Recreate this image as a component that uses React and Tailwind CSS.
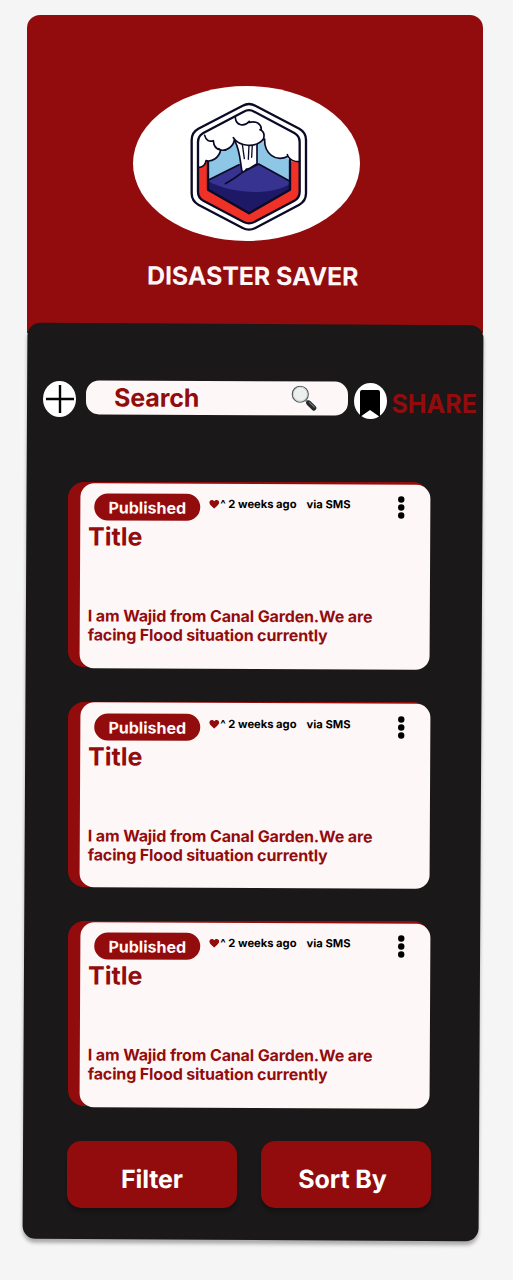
import React from "react";

function Logo() {
  return (
    <svg className="h-[140px] w-[135px]" viewBox="0 0 405 420" fill="none" strokeLinejoin="round" strokeLinecap="round">
      <path d="M188 29 Q207 19 226 29 L358 98 Q378 109 378 132 L378 292 Q378 315 358 326 L226 396 Q207 406 188 396 L55 326 Q35 315 35 292 L35 132 Q35 109 55 98 Z" fill="#fff" stroke="#0b0a26" strokeWidth="7" />
      <path d="M191 47 Q207 38 223 47 L343 111 Q359 120 359 138 L359 287 Q359 305 343 314 L223 378 Q207 386 191 378 L70 314 Q54 305 54 287 L54 138 Q54 120 70 111 Z" fill="#fff" />
      <path d="M54 215 Q70 212 78 196 L335 196 L359 197 L359 287 Q359 305 343 314 L223 378 Q207 386 191 378 L70 314 Q54 305 54 287 Z" fill="#ef3127" />
      <path d="M84 194 L124 163 L163 132 L245 132 L330 192 L330 281 L207 352 L84 281 Z" fill="#8ec7e5" />
      <path d="M84 253 L181 204 L190 225 L236 204 L330 256 L330 281 L207 352 L84 281 Z" fill="#373391" />
      <path d="M84 256 C155 294 275 300 330 263 L330 281 L207 352 L84 281 Z" fill="#1d1967" />
      <path d="M84 253 L177 206 M190 227 L236 204 L330 256 M190 227 L164 246 L136 263" stroke="#0b0a26" strokeWidth="5" />
      <path d="M84 194 L84 281 L207 352 L330 281 L330 192" stroke="#0b0a26" strokeWidth="7" />
      <path d="M165 136 C180 163 180 195 186 226 C192 229 196 225 199 219 C208 222 219 208 231 204 L231 136 Z" fill="#fff" stroke="#0b0a26" strokeWidth="5" />
      <path d="M187 145 L193 188 M207 147 L205 190 M217 145 L215 184" stroke="#0b0a26" strokeWidth="4" />
      <path d="M54 215 Q76 213 78 194 C96 199 118 184 122 162 C139 166 163 151 161 127 C180 153 229 156 249 131 L254 133 C254 170 286 200 324 180 Q335 198 359 197 L359 138 Q359 120 343 111 L223 47 Q207 38 191 47 L70 114 Q54 122 54 138 Z" fill="#fff" />
      <path d="M54 215 Q76 213 78 194 C96 199 118 184 122 162 C139 166 163 151 163 129 L160 125 C178 153 228 156 250 130 C254 118 252 106 240 101 L244 99 C243 83 228 74 208 79 M166 65 C168 90 194 93 208 76" stroke="#0b0a26" strokeWidth="5" />
      <path d="M74 118 C78 134 88 138 100 134 C101 151 110 160 122 162 M248 131 L254 129 C252 171 286 200 324 181 Q335 198 359 197 M324 181 L322 176 M122 162 L116 158" stroke="#0b0a26" strokeWidth="5" />
      <path d="M191 47 Q207 38 223 47 L343 111 Q359 120 359 138 L359 287 Q359 305 343 314 L223 378 Q207 386 191 378 L70 314 Q54 305 54 287 L54 138 Q54 120 70 111 Z" stroke="#0b0a26" strokeWidth="7" />
    </svg>
  );
}

function Magnifier() {
  return (
    <svg className="h-[26px] w-[26px]" viewBox="0 0 26 26" fill="none">
      <path d="M15 15 L18 18" stroke="#777b7d" strokeWidth="2.5" />
      <path d="M17.6 17.4 L23 22.6" stroke="#26292b" strokeWidth="5" strokeLinecap="round" />
      <path d="M18.4 16.8 L23.4 21.6" stroke="#777b7d" strokeWidth="1" strokeLinecap="round" />
      <circle cx="9.3" cy="8.8" r="8" fill="#eef0f0" stroke="#545b60" strokeWidth="1.2" />
      <circle cx="9.3" cy="8.8" r="6.9" stroke="#c5cccf" strokeWidth="0.8" />
    </svg>
  );
}

function Toolbar() {
  return (
    <div className="mt-12 flex h-10 items-start pl-[43px]">
      <button aria-label="Add" className="flex h-9 w-[33px] items-center justify-center rounded-[50%] bg-white">
        <svg className="h-[30px] w-7" viewBox="0 0 28 30" stroke="#050505" strokeWidth="2.4">
          <path d="M14 1 V29 M0 15 H28" />
        </svg>
      </button>
      <div className="ml-2.5 flex h-[34px] w-[262px] rotate-[0.3deg] items-center justify-between rounded-[13px] bg-[#fef7f7] pl-7 pr-[31px]">
        <span className="text-[25px] leading-none font-bold tracking-[-0.1px] text-[#920c0d]">Search</span>
        <Magnifier />
      </div>
      <button aria-label="Bookmark" className="ml-[5.5px] mt-[2px] flex h-9 w-[33px] items-center justify-center rounded-[50%] bg-white">
        <svg className="mt-[5px] h-[27px] w-5" viewBox="0 0 20 27">
          <path d="M2 0 H18 Q20 0 20 2 V27 L10 20 L0 27 V2 Q0 0 2 0 Z" fill="#000" />
        </svg>
      </button>
      <span className="ml-[5px] mt-[9px] text-[25px] leading-7 font-bold text-[#920c0d]">SHARE</span>
    </div>
  );
}

function ReportCard() {
  return (
    <article className="h-[185px] w-[361px] rounded-[16px] bg-[#920c0d]">
      <div className="relative ml-3 h-[185px] w-[350px]">
        <div className="absolute inset-x-0 top-[1.5px] h-[184.5px] rotate-[0.3deg] rounded-[14px] bg-[#fef7f7]" />
        <div className="relative flex h-full rotate-[0.2deg] flex-col pt-3">
          <div className="flex h-[27px] items-start">
            <span className="ml-[14px] flex h-[27px] w-[106px] items-center justify-center rounded-full bg-[#920c0d] text-base font-bold text-[#fef7f7]">Published</span>
            <svg className="ml-[9px] mt-[6px] h-[9px] w-2.5" viewBox="0 0 20 18">
              <path d="M10 18 C7 14 0 10 0 5 C0 0 7 -2 10 3 C13 -2 20 0 20 5 C20 10 13 14 10 18Z" fill="#920c0d" />
            </svg>
            <span className="ml-px mt-[2px] text-[11.2px] leading-4 font-bold whitespace-nowrap text-black">^ 2 weeks ago</span>
            <span className="ml-[10px] mt-[2px] text-[11.2px] leading-4 font-bold whitespace-nowrap text-black">via SMS</span>
            <svg className="ml-[46.5px] mt-[0.5px] h-6 w-2 shrink-0" viewBox="0 0 8 24">
              <circle cx="4" cy="4" r="3.2" />
              <circle cx="4" cy="12" r="3.2" />
              <circle cx="4" cy="20" r="3.2" />
            </svg>
          </div>
          <h2 className="ml-[8px] mt-[2px] text-[25px] leading-7 font-bold text-[#920c0d]">Title</h2>
          <p className="ml-[8px] mt-[56px] text-base leading-[19px] font-bold tracking-[-0.13px] whitespace-nowrap text-[#920c0d]">
            I am Wajid from Canal Garden.We are<br />facing Flood situation currently
          </p>
        </div>
      </div>
    </article>
  );
}

function ActionButton({ label }) {
  return (
    <button className="flex h-[67px] w-[170px] rotate-[0.1deg] items-center justify-center rounded-[14px] bg-[#920c0d] pt-[11px] text-[25px] font-bold tracking-[-0.1px] text-white shadow-[0_4px_4px_rgba(0,0,0,0.25)] last:pr-[7px]">
      {label}
    </button>
  );
}

export default function App() {
  return (
    <main className="flex h-[1280px] w-[513px] flex-col overflow-hidden bg-[#f5f5f5] pt-[15px] font-['Inter',sans-serif]">
      <header className="ml-[26.5px] flex h-[318px] w-[456.5px] shrink-0 flex-col items-center rounded-t-[13px] bg-[#920c0d] pr-[17px] pt-[71px]">
        <div className="flex h-[155px] w-[227px] items-center justify-center rounded-[50%] bg-white pt-[4px] pl-[3px]">
          <Logo />
        </div>
        <h1 className="ml-[13px] mt-[19px] rotate-[0.25deg] text-[25px] leading-8 font-bold tracking-[-0.1px] whitespace-nowrap text-[#fef7f7]">DISASTER SAVER</h1>
      </header>
      <section className="relative -mt-[10px] h-[916px]">
        <div className="absolute left-[24.5px] top-[0.5px] h-[916px] w-[455.5px] rotate-[0.31deg] rounded-[13px] bg-[#1a1818] shadow-[0_4px_4px_rgba(0,0,0,0.3)]" />
        <div className="relative flex flex-col pt-[10px]">
          <Toolbar />
          <div className="mt-[61px] flex flex-col gap-[34.5px] pl-[67.5px]">
            <ReportCard />
            <ReportCard />
            <ReportCard />
          </div>
          <div className="mt-[35px] flex gap-6 pl-[67px]">
            <ActionButton label="Filter" />
            <ActionButton label="Sort By" />
          </div>
        </div>
      </section>
    </main>
  );
}
